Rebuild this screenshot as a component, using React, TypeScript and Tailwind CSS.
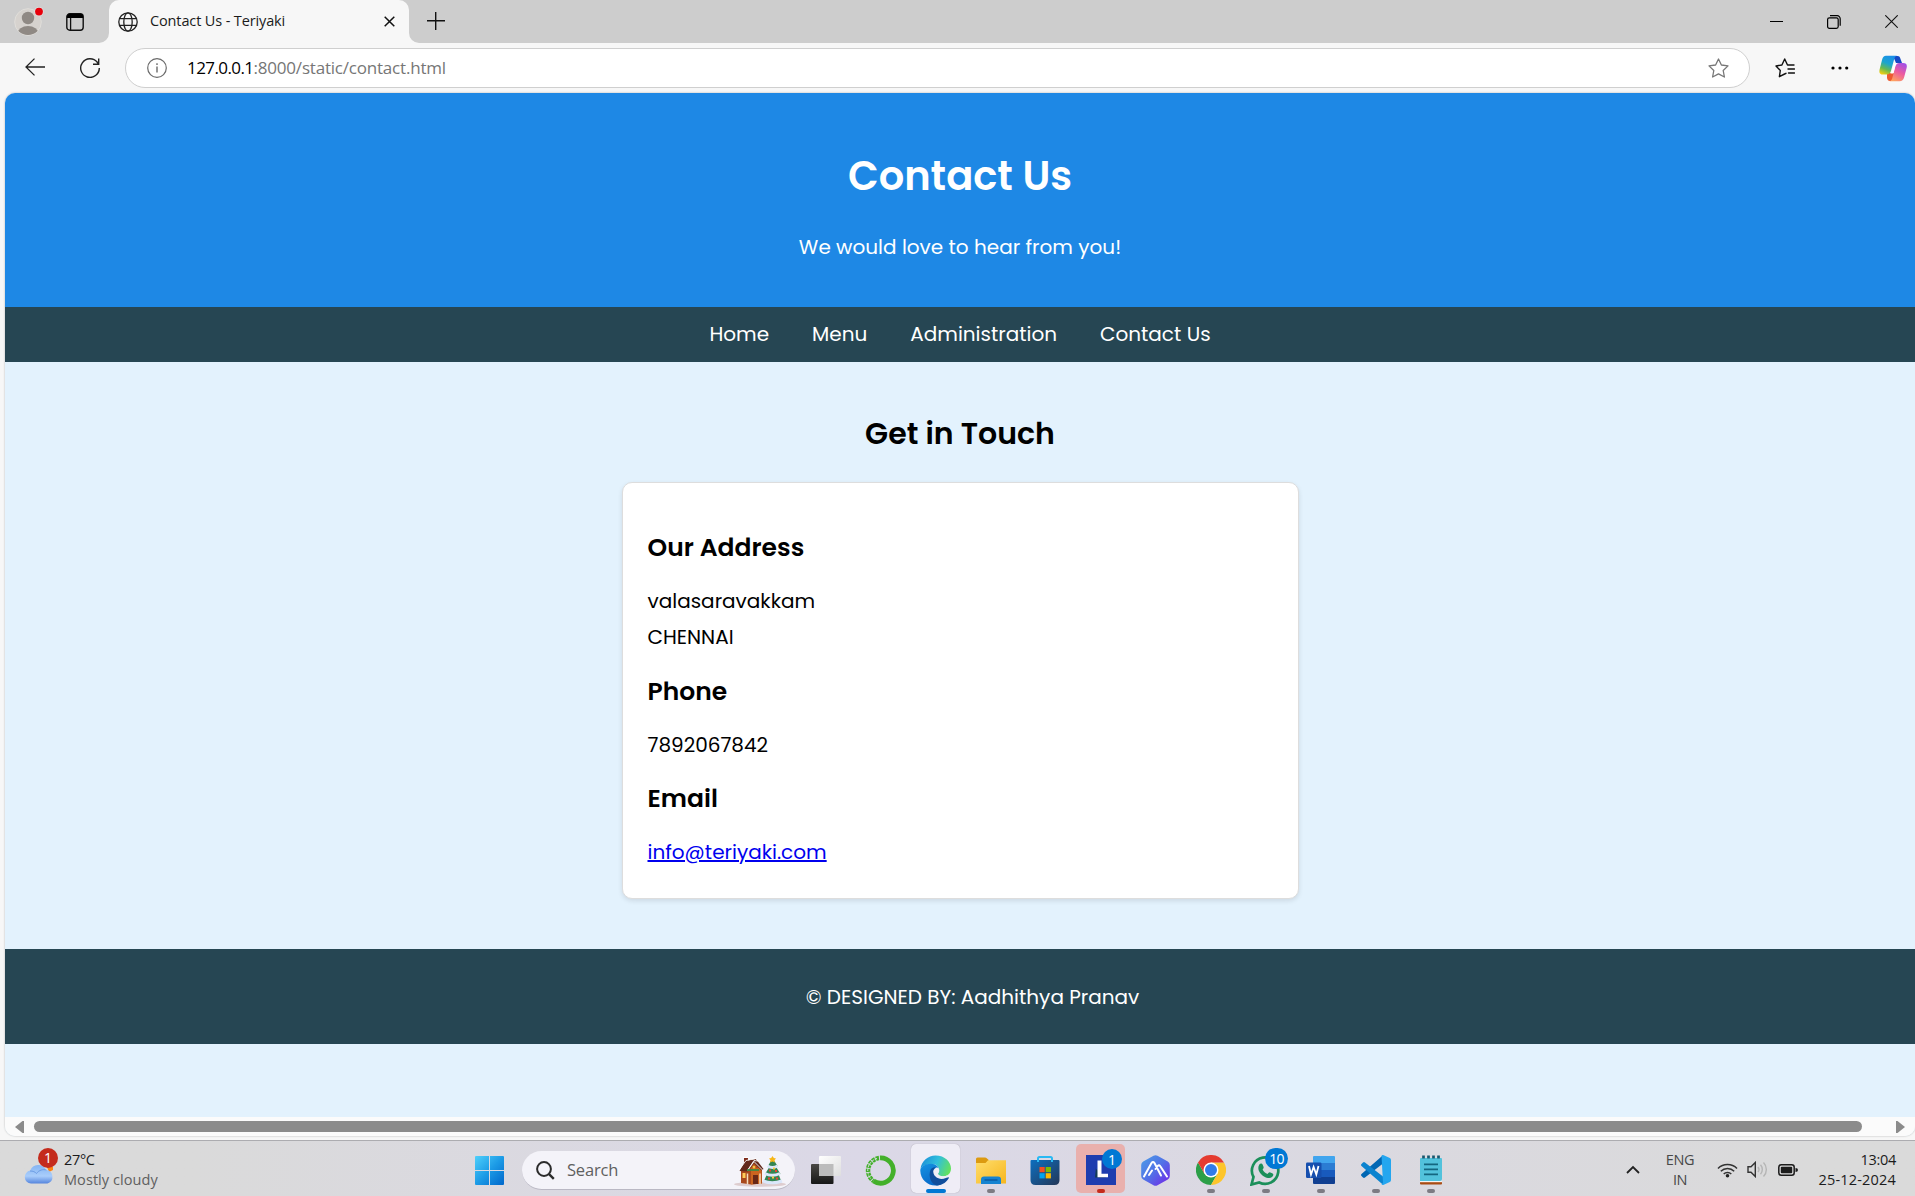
import type { ReactNode } from "react";

function BrowserTabs() {
  return (
    <div className="flex h-[43px] items-stretch bg-[#cdcdcd]">
      <div className="flex w-[99px] items-center">
        <div className="ml-[14px] h-[30px] w-[32px]">
          <svg width="32" height="30" viewBox="0 0 32 30">
            <defs>
              <clipPath id="avatar">
                <circle cx="14" cy="15" r="13" />
              </clipPath>
            </defs>
            <circle cx="14" cy="15" r="13.3" fill="#d6d2ce" stroke="#e0deda" strokeWidth="1" />
            <circle cx="14" cy="11" r="6.2" fill="#8f8984" />
            <ellipse cx="14" cy="26.5" rx="10.5" ry="7.5" fill="#8f8984" clipPath="url(#avatar)" />
            <circle cx="25" cy="4.6" r="4.8" fill="#dcdcdc" />
            <circle cx="25" cy="4.6" r="3.9" fill="#e8000b" />
          </svg>
        </div>
        <svg className="ml-[20px]" width="18" height="18" viewBox="0 0 18 18" fill="none">
          <rect x=".8" y=".8" width="16.4" height="16.4" rx="3" stroke="#111" strokeWidth="1.4" />
          <path d="M1 5V3.5A3 3 0 0 1 4 .8h10a3 3 0 0 1 3.2 2.7V5z" fill="#000" />
          <path d="M4.6 5v12" stroke="#111" strokeWidth="1.3" />
        </svg>
      </div>
      <svg className="mt-[33px]" width="10" height="10">
        <path d="M10 0A10 10 0 0 1 0 10H10z" fill="#f7f7f7" />
      </svg>
      <div className="flex w-[300px] items-center rounded-t-[10px] bg-[#f7f7f7] pl-[9px]">
        <svg width="20" height="20" viewBox="0 0 20 20" fill="none" stroke="#222" strokeWidth="1.3">
          <circle cx="10" cy="10" r="9.2" />
          <ellipse cx="10" cy="10" rx="4.2" ry="9.2" />
          <path d="M1.8 6.6h16.4M1.8 13.4h16.4" />
        </svg>
        <span className="ml-[12px] pb-[2px] text-[14.5px] tracking-[-0.13px] text-[#1b1b1b]">Contact Us - Teriyaki</span>
        <svg className="ml-auto mr-[14px]" width="11" height="11" stroke="#111" strokeWidth="1.5">
          <path d="M.7.7l9.6 9.6M10.3.7L.7 10.3" />
        </svg>
      </div>
      <svg className="mt-[33px]" width="10" height="10">
        <path d="M0 0A10 10 0 0 0 10 10H0z" fill="#f7f7f7" />
      </svg>
      <svg className="mt-[12px] ml-[8px]" width="18" height="18" stroke="#111" strokeWidth="1.4">
        <path d="M0 8.7h18M8.7 0v18" />
      </svg>
      <div className="ml-auto mr-[17px] flex items-center gap-[44px]">
        <svg width="13" height="13" stroke="#000" strokeWidth="1">
          <path d="M0 6.5h13" />
        </svg>
        <svg width="14" height="14" viewBox="0 0 14 14" fill="none" stroke="#000" strokeWidth="1.2">
          <rect x=".6" y="2.8" width="10.6" height="10.6" rx="1.8" />
          <path d="M3 .7h7.2a3 3 0 0 1 3 3v7" />
        </svg>
        <svg width="13" height="13" stroke="#111" strokeWidth="1.1">
          <path d="M.3.3l12.4 12.4M12.7.3L.3 12.7" />
        </svg>
      </div>
    </div>
  );
}

function Toolbar() {
  return (
    <div className="flex h-[50px] items-center bg-[#f7f7f7] pb-px">
      <svg className="mb-px ml-[25px]" width="20" height="18" viewBox="0 0 20 18" fill="none" stroke="#222" strokeWidth="1.3">
        <path d="M20 9H1M9.5.6L1 9l8.500 8.400" />
      </svg>
      <svg className="ml-[35px]" width="20" height="20" viewBox="0 0 20 20" fill="none" stroke="#222" strokeWidth="1.4">
        <path d="M19.300 10A9.300 9.300 0 1 1 17.300 4.300L18.600 6M18.700.5V6.200H13" />
      </svg>
      <div className="ml-[25px] flex h-[40px] w-[1625px] items-center rounded-full border border-[#cfcfcf] bg-white">
        <svg className="ml-[21px]" width="20" height="20" viewBox="0 0 20 20" fill="none" stroke="#6a6a6a" strokeWidth="1.2">
          <circle cx="10" cy="10" r="9.300" />
          <path d="M10 8.500V14.500M10 5.200V6.900" strokeWidth="1.400" />
        </svg>
        <div className="ml-[20px] flex pt-px text-[17px]">
          <span className="tracking-[-0.58px] text-black">127.0.0.1</span>
          <span className="tracking-[-0.2px] text-[#767676]">:8000/static/contact.html</span>
        </div>
        <svg className="ml-auto mr-[20px]" width="21" height="20" viewBox="0 0 21 20" fill="none" stroke="#777" strokeWidth="1.3" strokeLinejoin="round">
          <path d="M10.500 1l2.900 6 6.600.9-4.800 4.600 1.200 6.500-5.900-3.100L4.600 19l1.200-6.500L1 7.900 7.600 7z" />
        </svg>
      </div>
      <svg className="ml-[25px]" width="20" height="20" viewBox="0 0 20 20" fill="none" stroke="#111" strokeWidth="1.4" strokeLinejoin="round" strokeLinecap="round">
        <path d="M11 15.300L9.600 16 4.400 18.700 5.300 12.500 1 8l5.900-1L9.700 1l2.800 6H19M13 11h6.500M13.500 15H19.500" />
      </svg>
      <svg className="ml-[36px]" width="18" height="4" fill="#000">
        <circle cx="2" cy="2" r="1.600" />
        <circle cx="9" cy="2" r="1.600" />
        <circle cx="15.700" cy="2" r="1.600" />
      </svg>
      <svg className="mt-px ml-[30px]" width="28" height="27" viewBox="0 0 28 27">
        <defs>
          <linearGradient id="copA" x1=".6" y1="0" x2=".2" y2="1">
            <stop offset="0" stopColor="#1a8fe8" />
            <stop offset=".4" stopColor="#1ba5cf" />
            <stop offset=".7" stopColor="#66b952" />
            <stop offset="1" stopColor="#f5cf10" />
          </linearGradient>
          <linearGradient id="copB" x1=".8" y1="0" x2=".3" y2="1">
            <stop offset="0" stopColor="#a04fe8" />
            <stop offset=".5" stopColor="#ec5aa0" />
            <stop offset="1" stopColor="#ffa25e" />
          </linearGradient>
        </defs>
        <path d="M14 1h4.500c2 0 2.500 1 3 3l1.500 4h-6z" fill="#1549c5" />
        <path d="M8 18h8l-2 6c-.5 1.500-1.500 2-3 2-2 0-2.500-1-3-3z" fill="#ed5a30" />
        <path d="M7 .8h11c-2 .5-2.500 2-3 4l-3 11c-.7 2.500-2 3.700-4.500 3.700H3.500C.5 19.500 0 17 .6 14.500L3 5C3.800 2 5 .8 7 .8z" fill="url(#copA)" />
        <path d="M20.500 8H24c3.500 0 4.300 2 3.600 5l-2.400 9c-.8 3-2.200 4.300-4.700 4.300H10.500c2-.5 2.500-2 3-4l2.800-10.500C17 9.200 18 8 20.500 8z" fill="url(#copB)" />
        <path d="M15 8.500h3.200c-1.200.6-1.700 1.700-2.100 3.100l-1.800 6.900h-3.100c1-.6 1.300-1.500 1.700-2.800z" fill="#fff" />
      </svg>
    </div>
  );
}

function ContactPage() {
  return (
    <div className="flex h-[1043px] flex-col overflow-hidden rounded-[10px] bg-[#e3f2fd] font-['Poppins',sans-serif] text-[20px] leading-[36px] text-black">
      <header className="h-[214px] bg-[#1e88e5] pt-[53px] text-center text-white">
        <h1 className="text-[40px] leading-[60px] font-semibold">Contact Us</h1>
        <p className="mt-[23px]">We would love to hear from you!</p>
      </header>
      <nav className="flex h-[55px] items-center justify-center gap-[43px] bg-[#264653] pb-[2px] text-white">
        <a>Home</a>
        <a>Menu</a>
        <a>Administration</a>
        <a>Contact Us</a>
      </nav>
      <main className="flex h-[587px] flex-col items-center pt-[50px]">
        <h2 className="text-[30px] leading-[44px] font-semibold">Get in Touch</h2>
        <section className="mt-[26px] h-[417px] w-[677px] rounded-[10px] border border-[#dddddd] bg-white pt-[46px] pr-[24px] pl-[25px] shadow-[0_2px_5px_rgba(0,0,0,0.1)]">
          <h3 className="text-[25px] leading-[38px] font-semibold">Our Address</h3>
          <p className="mt-[16px]">valasaravakkam</p>
          <p>CHENNAI</p>
          <h3 className="mt-[18px] text-[25px] leading-[38px] font-semibold">Phone</h3>
          <p className="mt-[16px]">7892067842</p>
          <h3 className="mt-[17px] text-[25px] leading-[38px] font-semibold">Email</h3>
          <p className="mt-[16px]">
            <a className="text-[#0000ee] underline">info@teriyaki.com</a>
          </p>
        </section>
      </main>
      <footer className="h-[95px] bg-[#264653] pt-[30px] pl-[25px] text-center text-white">© DESIGNED BY: Aadhithya Pranav</footer>
      <div className="mt-auto flex h-[19px] items-center justify-between bg-[#fbfbfb] px-[10px]">
        <svg width="9" height="12" fill="#8b8b8b">
          <path d="M0 6L7.500 0H9V12H7.500z" />
        </svg>
        <div className="mr-[24px] h-[11px] w-[1828px] rounded-full bg-[#8b8b8b]" />
        <svg width="9" height="12" fill="#8b8b8b">
          <path d="M9 6L1.500 0H0V12H1.500z" />
        </svg>
      </div>
    </div>
  );
}

function Slot({ children, tile = "", mark = "" }: { children: ReactNode; tile?: string; mark?: string }) {
  return (
    <div className="flex w-[55px] justify-center">
      <div className={`relative flex h-[49px] w-[49px] items-center justify-center rounded-[5px] pt-[3px] ${tile}`}>
        {children}
        {mark && <span className={`absolute bottom-0 h-[4px] rounded-full ${mark}`} />}
      </div>
    </div>
  );
}

const dot = "w-[8px] bg-[#7d7b83]";

function Taskbar() {
  return (
    <div className="flex h-[56px] items-center border-t border-[#acacb0] bg-linear-to-r from-[#dadada] from-10% via-[#dbd8e7] via-45% to-[#dadada] to-95%">
      <div className="flex w-[475px] items-center">
        <div className="relative ml-[24px] h-[36px] w-[31px]">
          <svg className="mt-[13px]" width="31" height="20" viewBox="0 0 31 20">
            <defs>
              <linearGradient id="cloud" x1="0" y1="0" x2="0" y2="1">
                <stop offset="0" stopColor="#84b4f2" />
                <stop offset=".6" stopColor="#a9cdfb" />
                <stop offset="1" stopColor="#5585dd" />
              </linearGradient>
            </defs>
            <path d="M23 3h6v3l-4 2z" fill="#ff8412" />
            <path d="M7 19.500a6.500 6.500 0 0 1-.8-12.900A8.500 8.500 0 0 1 22 6a6.900 6.900 0 0 1 1.500 13.500z" fill="url(#cloud)" />
            <path d="M6 7c3 0 5 .8 6.500 2.500M12.500 9.500C15 6 19 5 22.500 6" stroke="#6c9ce4" strokeWidth="1" fill="none" />
          </svg>
          <span className="absolute -top-[3px] left-[14px] flex h-[20px] w-[20px] items-center justify-center rounded-full bg-[#c42b1c] text-[14px] text-white">1</span>
        </div>
        <div className="mt-[2px] ml-[9px] text-[14.500px] leading-[20px]">
          <div className="tracking-[-0.35px] text-[#1c1c1c]">27°C</div>
          <div className="tracking-[0.07px] text-[#606060]">Mostly cloudy</div>
        </div>
      </div>
      <svg className="mt-[3px]" width="29" height="29" viewBox="0 0 29 29">
        <defs>
          <linearGradient id="win" gradientUnits="userSpaceOnUse" x1="0" y1="0" x2="29" y2="29">
            <stop offset="0" stopColor="#4fd0fb" />
            <stop offset=".5" stopColor="#1c9be6" />
            <stop offset="1" stopColor="#0067cb" />
          </linearGradient>
        </defs>
        <path d="M0 1q0-1 1-1h13v14H0zM15 0h13q1 0 1 1v13H15zM0 15h14v14H1q-1 0-1-1zM15 15h14v13q0 1-1 1H15z" fill="url(#win)" />
      </svg>
      <div className="mt-[4px] ml-[18px] flex h-[39px] w-[273px] items-center rounded-full border-b border-[#bab8c4] bg-[#f4f3f9]">
        <svg className="ml-[14px]" width="19" height="19" viewBox="0 0 19 19" fill="none" stroke="#2b2b2b" strokeWidth="2">
          <circle cx="8" cy="8" r="6.900" />
          <path d="M12.800 12.800l5 5" strokeWidth="2.400" />
        </svg>
        <span className="mt-px ml-[12px] text-[16.500px] tracking-[-0.2px] text-[#606060]">Search</span>
        <svg className="mt-[2px] ml-auto mr-[8px]" width="53" height="31" viewBox="0 0 53 31">
          <ellipse cx="26" cy="28.200" rx="26" ry="2.500" fill="#decdcf" />
          <path d="M7 12.500L17 3l11 9v15.500l-11 1-10-1.500z" fill="#a9491c" />
          <path d="M17 12h10.500v15.500L17 28.500z" fill="#cb641f" />
          <path d="M10 2h4v6l-4 4z" fill="#7e2c1b" />
          <path d="M5.500 15L11 5l11-2 7.500 10-2 1.500L20 7l-6.500 8.500z" fill="#62281b" />
          <path d="M5.500 13.500L12 4.500 22 2.500 24 5l-4-.5L13.500 14.500l6.500-9 9 9M9 1.500h5.500" stroke="#fff" strokeWidth=".9" fill="none" />
          <path d="M13 14h12" stroke="#3b8b46" strokeWidth="1.800" />
          <path d="M19 19h5v9h-5z" fill="#682716" />
          <path d="M13.500 17.500v10.500M26 17.500V28" stroke="#f6ddbc" strokeWidth="1.500" />
          <rect x="8.500" y="17" width="3" height="5" fill="#ffcb56" />
          <circle cx="20" cy="11" r="1.500" fill="#f4c33e" />
          <path d="M38.500 2l5 8h-2l5 8h-2l3 8c-4 2-13 2-18 0l3.500-8h-2l5-8h-2z" fill="#338552" />
          <path d="M33.500 10q5 3 10 0M31 17.500q7 3.500 15 0M29 25q9 3.500 19 0" stroke="#dbe7fa" strokeWidth="3" fill="none" />
          <path d="M35 14.500h2M41 15h2M34 22.500h2M42 22.500h2" stroke="#e94132" strokeWidth="2" />
          <path d="M39 12.500h2M38 21.500h2" stroke="#f9cd43" strokeWidth="2" />
          <path d="M38.500 0l1.300 2 2.200.5-1.500 1.700.3 2.300-2.300-1-2.300 1 .3-2.300L35 2.500l2.200-.5z" fill="#f7b718" />
        </svg>
      </div>
      <div className="ml-[3px] flex items-center">
        <Slot>
          <svg width="30" height="28" viewBox="0 0 30 28">
            <defs>
              <linearGradient id="tvd" x1="0" y1="0" x2="0" y2="1">
                <stop offset="0" stopColor="#4a4845" />
                <stop offset="1" stopColor="#171717" />
              </linearGradient>
              <linearGradient id="tvl" x1="0" y1="0" x2="1" y2="1">
                <stop offset="0" stopColor="#fff" />
                <stop offset="1" stopColor="#dedede" />
              </linearGradient>
            </defs>
            <rect y="8" width="22.500" height="20" rx="1" fill="url(#tvd)" />
            <rect x="8" width="22" height="20" rx="1" fill="url(#tvl)" />
            <path d="M8 8h14.500v12H8z" fill="#bcbcbc" />
          </svg>
        </Slot>
        <Slot>
          <svg className="mr-px" width="31" height="31" viewBox="0 0 31 31" fill="none" stroke="#43b02a">
            <path d="M15 2.800A12.700 12.700 0 1 1 8.500 26" strokeWidth="4.800" />
            <path d="M14 3A12.700 12.700 0 0 0 8.500 26" strokeWidth="4.500" strokeDasharray="3.200 .9" />
            <path d="M12 3.500A12.500 12.500 0 0 0 6 24" strokeWidth="1" stroke="#dbd8e7" strokeDasharray="2.500 1" />
          </svg>
        </Slot>
        <Slot tile="bg-[#efedf6] shadow-[0_0_1px_rgba(0,0,0,0.3)]" mark="w-[20px] bg-[#0078d4]">
          <svg width="31" height="31" viewBox="0 0 31 31">
            <defs>
              <linearGradient id="edgeTop" x1="0" y1=".3" x2="1" y2=".6">
                <stop offset="0" stopColor="#1c8fd8" />
                <stop offset=".5" stopColor="#31bfdc" />
                <stop offset="1" stopColor="#65e25c" />
              </linearGradient>
              <linearGradient id="edgeLow" x1="0" y1="0" x2=".5" y2="1">
                <stop offset="0" stopColor="#1593e2" />
                <stop offset="1" stopColor="#0869c9" />
              </linearGradient>
            </defs>
            <path d="M.5 14C1.500 6 8 .5 15.500.5 25 .5 31 7 31 13.500c0 5-3.500 7.800-8 7.800-3.500 0-5-1.200-5-2.300 0-.8 1.300-1.300 1.300-3.700 0-3.300-3-6.300-7.300-6.300C6 9 1.500 11.500.5 14z" fill="url(#edgeTop)" />
            <path d="M.3 16C0 12 4.500 8.700 11 8.700c5 0 8 3.300 8.300 6.300C17 12.500 12.500 14 12 18c-.6 6 4 10 9.500 11-2 1.200-4 1.600-6 1.600C7 30.600.6 24 .3 16z" fill="url(#edgeLow)" />
            <path d="M10.500 15c1-2 3.500-3 5-2.500-2 1.200-2.700 3.500-2 5.700 1.200 4 5.500 6.300 10 5.600 2.500-.4 4-1.500 4.800-1.500.7 0 .7.700.3 1.300-3.300 5-7.700 6.900-11.600 6.900C11 29.500 8 21 10.500 15z" fill="#104e9c" />
            <path d="M18.800 13.200c.8 2.800-.6 4.200-.8 5.300-.1 1.500 2.300 2.800 5.500 2.800 1.500 0 3-.3 4.200-1-1.500 3-6 4.200-9.700 2.300-4.500-2.300-5.300-8-2-9.800.9-.4 2.100-.2 2.800.4z" fill="#efedf6" />
          </svg>
        </Slot>
        <Slot mark={dot}>
          <svg width="30" height="27" viewBox="0 0 30 27">
            <defs>
              <linearGradient id="fold" x1="0" y1="0" x2="1" y2="1">
                <stop offset="0" stopColor="#ffdd6c" />
                <stop offset="1" stopColor="#f6b61d" />
              </linearGradient>
            </defs>
            <path d="M0 2q0-1.500 1.500-1.500H9q1 0 2 1l2 1.700L10 7H0z" fill="#dc9a10" />
            <path d="M0 6h9.500L12 3.300h18V26.500H0z" fill="url(#fold)" />
            <path d="M5 27v-4.500q0-3 3-3h14q3 0 3 3V27z" fill="#1583d1" />
            <path d="M8.500 23h13" stroke="#0a549a" strokeWidth="1.300" />
          </svg>
        </Slot>
        <Slot>
          <svg className="mr-px" width="30" height="30" viewBox="0 0 30 30">
            <defs>
              <linearGradient id="shop" x1="0" y1="0" x2="1" y2="1">
                <stop offset="0" stopColor="#0c6fc0" />
                <stop offset="1" stopColor="#253757" />
              </linearGradient>
            </defs>
            <path d="M8 7V3.500Q8 2 9.500 2h11Q22 2 22 3.500V7" stroke="#29b9f3" strokeWidth="2" fill="none" />
            <path d="M.5 6q0-1 1-1h27q1 0 1 1v19q0 5-5 5h-19q-5 0-5-5z" fill="url(#shop)" />
            <path d="M8 5v2M22 5v2" stroke="#29b9f3" strokeWidth="2" />
            <path d="M9.500 12h5.200v5.200H9.500z" fill="#f25022" />
            <path d="M15.700 12h5.200v5.200h-5.200z" fill="#7fba00" />
            <path d="M9.500 18.200h5.200v5.200H9.500z" fill="#00a4ef" />
            <path d="M15.700 18.200h5.200v5.200h-5.200z" fill="#ffb900" />
          </svg>
        </Slot>
        <Slot tile="bg-[#e9b0ad]" mark="w-[8px] bg-[#c42b1c]">
          <svg width="30" height="30" viewBox="0 0 30 30">
            <path d="M0 0h30v30H0z" fill="#1e3daf" />
            <path d="M10 14v-2l-1 10.500h11z" fill="#123b55" />
            <path d="M11.500 5.500h4v13.200H22v3.600H11.500z" fill="#fff" />
          </svg>
          <span className="absolute top-[5px] left-[26px] flex h-[20px] w-[20px] items-center justify-center rounded-full bg-[#0078d4] text-[14px] text-white">1</span>
        </Slot>
        <Slot>
          <svg width="29" height="31" viewBox="0 0 29 31">
            <defs>
              <linearGradient id="hex" x1="0" y1="0" x2="1" y2="1">
                <stop offset="0" stopColor="#4c9fe6" />
                <stop offset=".5" stopColor="#5270e7" />
                <stop offset="1" stopColor="#7521e8" />
              </linearGradient>
            </defs>
            <path d="M12.500.8q2-1.200 4 0l10.300 5.800q2 1.200 2 3.400v11q0 2.200-2 3.400l-10.300 5.800q-2 1.200-4 0L2.200 24.400q-2-1.200-2-3.400V10q0-2.200 2-3.400z" fill="url(#hex)" />
            <path d="M3 21.500L10.500 8q1.500-2 3 0L20 20.500M8 20l3-4.500M14.500 14l2.200-3q1.500-1.500 2.600.3L26 21.500" stroke="#fff" strokeWidth="2" fill="none" strokeLinecap="round" />
          </svg>
        </Slot>
        <Slot mark={dot}>
          <svg width="30" height="30" viewBox="0 0 30 30">
            <path d="M2 7.500A15 15 0 0 0 15 30L21.500 18.700 15 15 8.500 18.700z" fill="#2c9f48" />
            <path d="M28 7.500A15 15 0 0 1 15 30L21.500 18.700 21.500 11.300 15 7.500z" fill="#fdc52b" />
            <path d="M2 7.500A15 15 0 0 1 28 7.500H15L8.500 18.700z" fill="#e53b30" />
            <circle cx="15" cy="15" r="7.500" fill="#fff" />
            <circle cx="15" cy="15" r="6" fill="#317be9" />
          </svg>
        </Slot>
        <Slot mark={dot}>
          <svg width="31" height="31" viewBox="0 0 31 31">
            <path d="M1.500 29.500l2-7.500A13.200 13.200 0 1 1 9.200 27.500z" fill="none" stroke="#1c8f5a" strokeWidth="2.700" />
            <path d="M9.300 9.500c1-1.300 2.700-1.500 3.300 0l1 2.600c.2.700-.2 1.400-1 2.300 1 2 2.700 3.500 5 4.500.8-.8 1.500-1.900 2.300-1.600l2.700 1.300c1.200.6.800 2-.3 3.200-2 2-5 1.500-8.300-.4-4.300-2.700-7.300-7.500-4.700-11.900z" fill="#1c8f5a" />
          </svg>
          <span className="absolute top-[4px] left-[24px] flex h-[21px] w-[23px] items-center justify-center rounded-full bg-[#0078d4] text-[14px] tracking-[-0.8px] text-white">10</span>
        </Slot>
        <Slot mark={dot}>
          <svg width="29" height="28" viewBox="0 0 29 28">
            <path d="M7 1q0-1 1-1h20q1 0 1 1v6H7z" fill="#41a5ee" />
            <path d="M7 7h22v7H7z" fill="#2b7cd3" />
            <path d="M7 14h22v7H7z" fill="#185abd" />
            <path d="M7 21h22v6q0 1-1 1H8q-1 0-1-1z" fill="#103f91" />
            <rect y="6.500" width="15.500" height="15.500" rx="1.200" fill="#164fae" />
            <path d="M3 10l2 8.500L7.600 11 10.300 18.500l2.200-8.500" stroke="#fff" strokeWidth="1.800" fill="none" />
          </svg>
        </Slot>
        <Slot mark={dot}>
          <svg width="30" height="30" viewBox="0 0 30 30">
            <path d="M22 .3V8.500L4 22.500q-1 .8-2 0L.5 21q-1-1 0-2z" fill="#0066b3" />
            <path d="M22 29.700V21.500L4 7.500q-1-.8-2 0L.5 9q-1 1 0 2z" fill="#0b83cf" />
            <path d="M20.500.7q1-1 2.300-.4l6 2.800q1.200.6 1.200 2v19.800q0 1.400-1.200 2l-6 2.800q-1.300.6-2.300-.4L22 28z" fill="#24a6ef" />
          </svg>
        </Slot>
        <Slot mark={dot}>
          <svg width="22" height="30" viewBox="0 0 22 30">
            <path d="M0 26h22v2.500q0 1-1 1H1q-1 0-1-1z" fill="#a94b12" />
            <path d="M0 25.500h22v1.700H0z" fill="#f3f3f3" />
            <path d="M0 4q0-1 1-1h20q1 0 1 1v20q0 2-2 2H0z" fill="#52c2dc" />
            <path d="M4 9.300h14M4 14.300h14M4 19.300h14" stroke="#146680" strokeWidth="1.800" />
            <path d="M3.500 .5v3M8.500 .5v3M13.500 .5v3M18.500 .5v3" stroke="#17586f" strokeWidth="2.700" />
          </svg>
        </Slot>
      </div>
      <div className="mt-[2px] ml-auto mr-[19px] flex items-center text-[14.500px] leading-[20px] text-[#1c1c1c]">
        <svg width="14" height="9" fill="none" stroke="#222" strokeWidth="1.800">
          <path d="M1 8l6-6 6 6" />
        </svg>
        <div className="mt-px ml-[25px] w-[30px] text-center text-[14.500px] tracking-[-0.4px] text-[#484848]">
          <div>ENG</div>
          <div>IN</div>
        </div>
        <svg className="ml-[22px]" width="21" height="16" viewBox="0 0 21 16" fill="none" stroke="#333" strokeWidth="1.500">
          <path d="M1 6.500a13.400 13.400 0 0 1 19 0M3.800 9.300a9.500 9.500 0 0 1 13.400 0M6.700 12a5.400 5.400 0 0 1 7.600 0" />
          <circle cx="10.500" cy="13.700" r="1.800" fill="#222" stroke="none" />
        </svg>
        <svg className="ml-[9px]" width="21" height="17" viewBox="0 0 21 17" fill="none" stroke="#333" strokeWidth="1.400">
          <path d="M1 5.800h3L8.300 1.500v14L4 11.200H1z" />
          <path d="M11 6a4 4 0 0 1 0 5M13.500 3.800a7 7 0 0 1 0 9.400M16.500 1.500a10 10 0 0 1 0 14" stroke="#b5b5b5" />
        </svg>
        <svg className="ml-[10px]" width="20" height="12" viewBox="0 0 20 12">
          <rect x=".8" y=".8" width="15.400" height="10.400" rx="2.500" fill="none" stroke="#1c1c1c" strokeWidth="1.500" />
          <rect x="2.800" y="2.800" width="11.400" height="6.400" rx="1" fill="#1c1c1c" />
          <path d="M17.500 4q2.500 0 2.500 2t-2.500 2z" fill="#1c1c1c" />
        </svg>
        <div className="ml-[20px] w-[78px] text-right">
          <div className="tracking-[-0.3px]">13:04</div>
          <div className="tracking-[0.18px]">25-12-2024</div>
        </div>
      </div>
    </div>
  );
}

export default function App() {
  return (
    <div className="flex h-[1196px] w-[1915px] flex-col overflow-hidden bg-[#f7f7f7] font-['Open_Sans',sans-serif]">
      <BrowserTabs />
      <Toolbar />
      <div className="h-[1047px] pl-[5px]">
        <div className="rounded-[10px] shadow-[0_0_2px_rgba(0,0,0,0.3)]">
          <ContactPage />
        </div>
      </div>
      <Taskbar />
    </div>
  );
}
